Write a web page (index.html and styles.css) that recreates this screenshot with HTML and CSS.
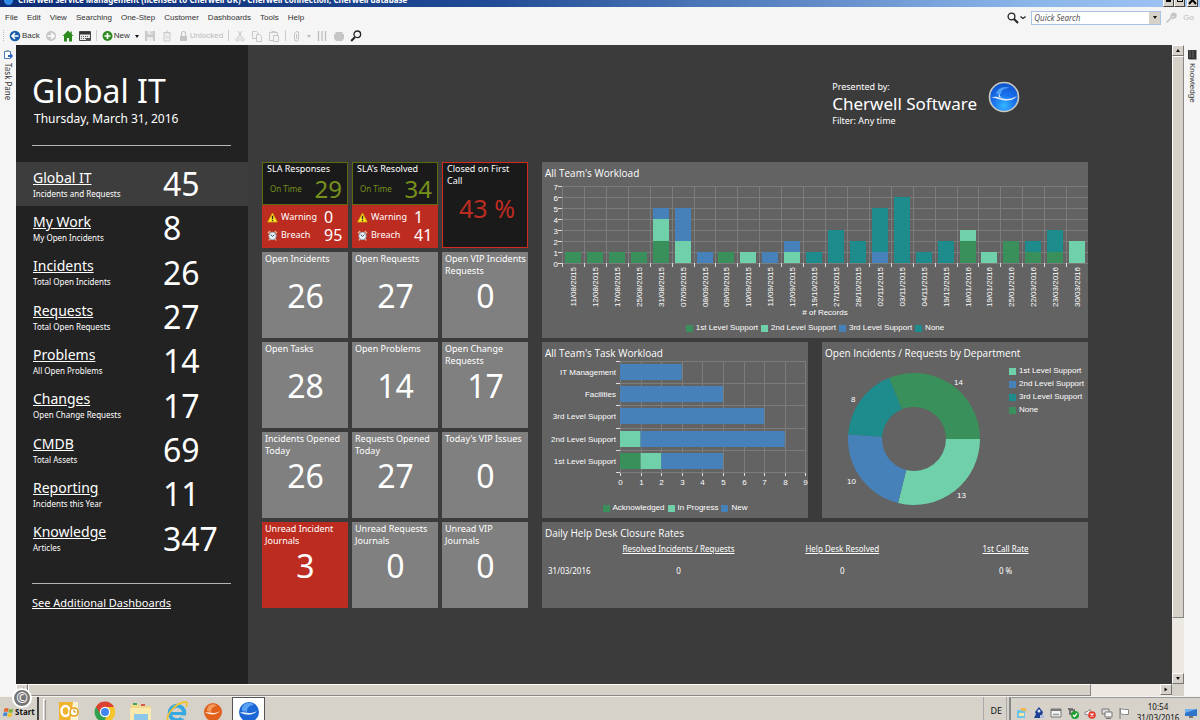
FILE: index.html
```html
<!DOCTYPE html>
<html lang="en">
<head>
<meta charset="utf-8">
<title>Cherwell Service Management</title>
<link rel="stylesheet" href="styles.css">
</head>
<body>
<header class="titlebar">
  <span class="titlebar-logo"></span>
  <span class="titlebar-text">Cherwell Service Management (licensed to Cherwell UK) - Cherwell connection, Cherwell database</span>
  <div class="window-buttons">
    <button aria-label="Minimize"><i class="bar"></i></button><button aria-label="Restore"><i class="box"></i></button><button class="close" aria-label="Close"><svg width="9" height="8" viewBox="0 0 9 8"><path d="M1 -2 8 6M8 -2 1 6" stroke="#000" stroke-width="2"/></svg></button>
  </div>
</header>

<div class="menubar">
  <nav class="menus">
    <button>File</button><button>Edit</button><button>View</button><button>Searching</button><button>One-Step</button><button>Customer</button><button>Dashboards</button><button>Tools</button><button>Help</button>
  </nav>
  <div class="search">
    <button class="search-mode" aria-label="Search type"><svg width="20" height="12" viewBox="0 0 20 12" fill="none" stroke="#222"><circle cx="4.5" cy="4.5" r="3.4" stroke-width="1.3"/><path d="m7 7 4 4" stroke-width="2"/><path d="m13.500 4.500 2.500 2 2.500-2" stroke-width="1.300"/></svg></button>
    <div class="search-box"><input type="text" placeholder="Quick Search" aria-label="Quick Search"><button aria-label="Recent searches"><i class="caret"></i></button></div>
    <button class="search-tool" aria-label="Search options"><svg width="12" height="12" viewBox="0 0 12 12"><path d="M1.500 10.500 7 5M6.500 5.500C5.600 3 7.500 1 9.500 1.500L8 3l1 1 1.800-1.300C11.500 5 9.300 6.600 7 6" fill="none" stroke="#c4c4c4" stroke-width="1.600"/></svg></button>
    <button class="go" disabled>Go</button>
  </div>
</div>

<div class="toolbar">
  <i class="grip"></i>
  <button><svg width="12" height="12" viewBox="0 0 12 12"><circle cx="6" cy="6" r="5.300" fill="#1a5da8"/><path d="M9.500 6H3M6 3 3 6l3 3" stroke="#fff" stroke-width="1.600" fill="none"/></svg>Back</button>
  <button aria-label="Forward"><svg width="12" height="12" viewBox="0 0 12 12"><circle cx="6" cy="6" r="5" fill="#c6c6c6"/><path d="M2.500 6H9M6 3l3 3-3 3" stroke="#fff" stroke-width="1.600" fill="none"/></svg></button>
  <button aria-label="Home"><svg width="12" height="12" viewBox="0 0 12 12"><path d="M6 .5.500 6H2v5.500h3V8h2v3.500h3V6h1.500L9.800 4.200V1.500H8.500V3z" fill="#2c8a1e"/></svg></button>
  <button aria-label="Calendar"><svg width="12" height="12" viewBox="0 0 12 12"><path d="M.5 1.500h11v9H.5z" fill="#e8e8e8" stroke="#444"/><path d="M1 2h10v2.500H1z" fill="#333"/><path d="M2 6.500h8M2 8.500h5" stroke="#666" stroke-dasharray="1 1"/><path d="M7 8h4v3H7z" fill="#555"/></svg></button>
  <i class="sep"></i>
  <button><svg width="11" height="12" viewBox="0 0 11 12"><circle cx="5.500" cy="6" r="5" fill="#2c8a1e"/><path d="M5.500 3v6M2.500 6h6" stroke="#fff" stroke-width="1.700"/></svg>New</button>
  <button aria-label="New options"><i class="caret"></i></button>
  <button aria-label="Save"><svg width="12" height="12" viewBox="0 0 12 12"><path d="M1 1h10v10H1z" fill="#c9c9c9"/><path d="M3.500 1h5v3.500h-5zM3 7h6v4H3z" fill="#ececec"/><path d="M7 1.500v2" stroke="#bbb"/></svg></button>
  <button aria-label="Delete"><svg width="12" height="12" viewBox="0 0 12 12"><path d="M3 3h6v8H3zM2.500 2.500h7M5 1h2" fill="none" stroke="#cbcbcb"/><path d="M5 5v4M7 5v4" stroke="#d4d4d4"/></svg></button>
  <button class="muted" disabled><svg width="11" height="12" viewBox="0 0 11 12"><path d="M2 6h7v5H2z" fill="#c4c4c4"/><path d="M3.500 6V3.500a2 2 0 0 1 4 0V6" fill="none" stroke="#c4c4c4" stroke-width="1.200"/></svg>Unlocked</button>
  <i class="sep"></i>
  <button aria-label="Cut"><svg width="12" height="12" viewBox="0 0 12 12" fill="none" stroke="#c8c8c8"><path d="m4 1 4 7M8 1 4 8"/><circle cx="3.500" cy="9.500" r="1.500"/><circle cx="8.500" cy="9.500" r="1.500"/></svg></button>
  <button aria-label="Copy"><svg width="12" height="12" viewBox="0 0 12 12" fill="#f4f4f4" stroke="#c8c8c8"><path d="M1.500 1.500h4l2 2v5h-6z"/><path d="M5.500 4.500h3l2 2v5h-5z"/></svg></button>
  <button aria-label="Paste"><svg width="12" height="12" viewBox="0 0 12 12" fill="#f4f4f4" stroke="#c8c8c8"><path d="M1.500 2.500h8v8h-8zM3.500 1.500h4"/><path d="M5.500 5.500h5v6h-5z"/></svg></button>
  <i class="sep"></i>
  <button aria-label="Attach"><svg width="11" height="12" viewBox="0 0 11 12" fill="none" stroke="#c4c4c4"><path d="M3.500 3v6a2 2 0 0 0 4 0V3a1.500 1.500 0 0 0-3 0"/><path d="M5.500 4v5"/></svg></button>
  <button class="muted" aria-label="Attach options"><i class="caret pale"></i></button>
  <button aria-label="Columns"><svg width="12" height="12" viewBox="0 0 12 12"><path d="M2.500 1v10M6 1v10M9.500 1v10" stroke="#bdbdbd" stroke-width="1.300"/></svg></button>
  <button aria-label="Print"><svg width="12" height="12" viewBox="0 0 12 12"><path d="M2.500 2h7v3h-7zM1 4h10v4.500L9 11H3L1 8.500z" fill="#c6c6c6"/></svg></button>
  <button aria-label="Find"><svg width="12" height="12" viewBox="0 0 12 12" fill="none" stroke="#222"><circle cx="7.300" cy="4.300" r="3.300" stroke-width="1.300"/><path d="M5 7 1.200 11" stroke-width="2"/></svg></button>
</div>

<div class="workspace">
  <aside class="dock dock-left">
    <svg width="9" height="11" viewBox="0 0 9 11"><path d="M.5 2.500h6v7h-6z" fill="#fff" stroke="#4b78c0"/><path d="M2 1h3v2H2z" fill="#8aa"/><path d="M4 6h3V4.500L9 7 7 9.500V8H4z" fill="#2f63c4"/></svg>
    <button>Task Pane</button>
  </aside>

  <div class="client">
    <div class="client-row">
      <aside class="sidebar">
        <div class="sidebar-head">
          <h1>Global IT</h1>
          <p>Thursday, March 31, 2016</p>
        </div>
        <nav class="metrics">
          <div class="metric current"><div><a href="#">Global IT</a><small>Incidents and Requests</small></div><strong>45</strong></div>
          <div class="metric"><div><a href="#">My Work</a><small>My Open Incidents</small></div><strong>8</strong></div>
          <div class="metric"><div><a href="#">Incidents</a><small>Total Open Incidents</small></div><strong>26</strong></div>
          <div class="metric"><div><a href="#">Requests</a><small>Total Open Requests</small></div><strong>27</strong></div>
          <div class="metric"><div><a href="#">Problems</a><small>All Open Problems</small></div><strong>14</strong></div>
          <div class="metric"><div><a href="#">Changes</a><small>Open Change Requests</small></div><strong>17</strong></div>
          <div class="metric"><div><a href="#">CMDB</a><small>Total Assets</small></div><strong>69</strong></div>
          <div class="metric"><div><a href="#">Reporting</a><small>Incidents this Year</small></div><strong>11</strong></div>
          <div class="metric"><div><a href="#">Knowledge</a><small>Articles</small></div><strong>347</strong></div>
        </nav>
        <div class="sidebar-foot"><a href="#">See Additional Dashboards</a></div>
      </aside>

      <main class="board">
        <div class="presenter">
          <div>
            <p>Presented by:</p>
            <h2>Cherwell Software</h2>
            <p>Filter: Any time</p>
          </div>
          <svg width="32" height="32" viewBox="0 0 32 32"><defs><radialGradient id="orb" cx=".5" cy=".8" r=".75"><stop offset="0" stop-color="#35b8ff"/><stop offset=".5" stop-color="#1a72ee"/><stop offset="1" stop-color="#0f55cc"/></radialGradient></defs><circle cx="16" cy="16" r="14.500" fill="url(#orb)" stroke="#c9c9c4" stroke-width="1.600"/><path d="M8 13C9 8 15 4 22 7c-5 0-9 2-9 6z" fill="#4d9df5"/><path d="M3 16.500c4-1.500 7-.5 10 .5 5 1.500 10 1.500 16-2-3 4-9 5.500-15 4-4-1-7-2.500-11-2.500z" fill="#dfeaf2"/><path d="M11 16c-1-2 0-3 1-3.500-1 2 0 3 2 4z" fill="#dfeaf2"/></svg>
        </div>

        <div class="board-body">
          <section class="tiles">
            <div class="tile sla">
              <div class="sla-top"><h3>SLA Responses</h3><p><span>On Time</span><b>29</b></p></div>
              <div class="sla-bottom">
                <p><svg class="ico" viewBox="0 0 12 12"><path d="M6 1 11.300 11H.7z" fill="#ffe12a" stroke="#c9a400" stroke-width=".8"/><path d="M6 4v3.600M6 8.500V10" stroke="#222" stroke-width="1.400"/></svg><span>Warning</span><b>0</b></p>
                <p><svg class="ico" viewBox="0 0 12 12"><path d="M1 3.500 3.500 1M11 3.500 8.500 1M3 9.500l-1 2M9 9.500l1 2" stroke="#d8b48a" stroke-width="1.500"/><circle cx="6" cy="6.500" r="4" fill="#eaf6fa" stroke="#9ab"/><path d="M4 5l2 2 2-2" stroke="#234" fill="none"/></svg><span>Breach</span><b>95</b></p>
              </div>
            </div>
            <div class="tile sla">
              <div class="sla-top"><h3>SLA's Resolved</h3><p><span>On Time</span><b>34</b></p></div>
              <div class="sla-bottom">
                <p><svg class="ico" viewBox="0 0 12 12"><path d="M6 1 11.300 11H.7z" fill="#ffe12a" stroke="#c9a400" stroke-width=".8"/><path d="M6 4v3.600M6 8.500V10" stroke="#222" stroke-width="1.400"/></svg><span>Warning</span><b>1</b></p>
                <p><svg class="ico" viewBox="0 0 12 12"><path d="M1 3.500 3.500 1M11 3.500 8.500 1M3 9.500l-1 2M9 9.500l1 2" stroke="#d8b48a" stroke-width="1.500"/><circle cx="6" cy="6.500" r="4" fill="#eaf6fa" stroke="#9ab"/><path d="M4 5l2 2 2-2" stroke="#234" fill="none"/></svg><span>Breach</span><b>41</b></p>
              </div>
            </div>
            <div class="tile first-call"><h3>Closed on First Call</h3><b>43 %</b></div>
            <div class="tile"><h3>Open Incidents</h3><b>26</b></div>
            <div class="tile"><h3>Open Requests</h3><b>27</b></div>
            <div class="tile"><h3>Open VIP Incidents Requests</h3><b>0</b></div>
            <div class="tile"><h3>Open Tasks</h3><b>28</b></div>
            <div class="tile"><h3>Open Problems</h3><b>14</b></div>
            <div class="tile"><h3>Open Change Requests</h3><b>17</b></div>
            <div class="tile"><h3>Incidents Opened Today</h3><b>26</b></div>
            <div class="tile"><h3>Requests Opened Today</h3><b>27</b></div>
            <div class="tile"><h3>Today's VIP Issues</h3><b>0</b></div>
            <div class="tile alert"><h3>Unread Incident Journals</h3><b>3</b></div>
            <div class="tile"><h3>Unread Requests Journals</h3><b>0</b></div>
            <div class="tile"><h3>Unread VIP Journals</h3><b>0</b></div>
          </section>

          <section class="panels">
            <article class="panel wide">
              <h3>All Team's Workload</h3>
              <svg class="chart" id="workload" viewBox="0 0 546 141"></svg>
              <ul class="legend">
                <li class="green">1st Level Support</li><li class="mint">2nd Level Support</li><li class="blue">3rd Level Support</li><li class="teal">None</li>
              </ul>
            </article>
            <article class="panel">
              <h3>All Team's Task Workload</h3>
              <svg class="chart tasks" id="tasks" viewBox="0 0 266 128"></svg>
              <ul class="legend"><li class="green">Acknowledged</li><li class="mint">In Progress</li><li class="blue">New</li></ul>
            </article>
            <article class="panel">
              <h3>Open Incidents / Requests by Department</h3>
              <div class="donut-row">
                <svg class="chart" id="departments" viewBox="0 0 184 154"></svg>
                <ul class="legend stacked"><li class="mint">1st Level Support</li><li class="blue">2nd Level Support</li><li class="teal">3rd Level Support</li><li class="green">None</li></ul>
              </div>
            </article>
            <article class="panel wide">
              <h3>Daily Help Desk Closure Rates</h3>
              <table class="rates">
                <colgroup><col class="c-date"><col class="c-a"><col class="c-b"><col></colgroup>
                <thead><tr><td></td><th scope="col">Resolved Incidents / Requests</th><th scope="col">Help Desk Resolved</th><th scope="col">1st Call Rate</th></tr></thead>
                <tbody><tr><th scope="row">31/03/2016</th><td>0</td><td>0</td><td>0 %</td></tr></tbody>
              </table>
            </article>
          </section>
        </div>
      </main>

      <div class="vscroll">
        <button aria-label="Scroll up"><i class="caret up"></i></button>
        <div class="thumb"></div><div class="track"></div>
        <button aria-label="Scroll down"><i class="caret"></i></button>
      </div>
    </div>
    <div class="hscroll">
      <button aria-label="Scroll left"><i class="caret left"></i></button>
      <div class="thumb"></div><div class="track"></div>
      <button aria-label="Scroll right"><i class="caret right"></i></button>
      <i class="corner"></i>
    </div>
  </div>

  <aside class="dock dock-right">
    <svg width="9" height="11" viewBox="0 0 9 11"><path d="M0 1h8v9H0z" fill="#333"/><path d="M2 1v8M5 1v8" stroke="#666"/><path d="M8.500 1v9.500H1" fill="none" stroke="#999"/></svg>
    <button>Knowledge</button>
  </aside>
</div>

<footer class="taskbar">
  <button class="start"><svg width="11" height="11" viewBox="0 0 11 11"><path d="M1.500 1.500q2-1 4 0L4.700 5q-2-1-4 0z" fill="#e8632b"/><path d="M6 1.800q2 1 4.500 0L9.500 5.300q-2 1-4.200 0z" fill="#7ab342"/><path d="M.5 5.700q2-1 4 0L3.700 9.200q-2-1-3.700 0z" fill="#3f87d6"/><path d="M5 6q2 1 4.400 0L8.500 9.600q-2 1-4.300 0z" fill="#f3c52c"/></svg>Start</button>
  <i class="divider"></i>
  <div class="apps">
    <button aria-label="Outlook"><svg width="24" height="24" viewBox="0 0 24 24"><path d="M2 2h19v20H2z" fill="#f2b430"/><path d="M16 2h5v20h-8z" fill="#fff3cf"/><ellipse cx="8.500" cy="11" rx="4" ry="5" fill="none" stroke="#fff" stroke-width="2.500"/><circle cx="17" cy="12" r="4" fill="#fff" stroke="#e5a11c" stroke-width="1.600"/><path d="M17 9.500V12h2" stroke="#c88812" fill="none"/></svg></button>
    <button aria-label="Chrome"><svg width="24" height="24" viewBox="0 0 24 24"><circle cx="12" cy="12" r="10.300" fill="#f5c52a"/><path d="M3 6.800A10.300 10.300 0 0 0 10.500 22.200L14 16z" fill="#30a152"/><path d="M12 7h9a10.300 10.300 0 0 0-18-.2L8 15z" fill="#dc4233"/><circle cx="12" cy="12" r="5.200" fill="#fff"/><circle cx="12" cy="12" r="4" fill="#4286f0"/></svg></button>
    <button aria-label="Explorer"><svg width="24" height="24" viewBox="0 0 24 24"><path d="M2 4h8l1 2h11v16H2z" fill="#f0d98a"/><path d="M4 3h4v2H4z" fill="#46a35e"/><path d="M12 4h4v2h-4z" fill="#d25a4b"/><path d="M1 8h21v14H1z" fill="#f8e9ae"/><path d="M5 14h14v9H5z" fill="#8cc7ea"/></svg></button>
    <button aria-label="Internet Explorer"><svg width="24" height="24" viewBox="0 0 24 24"><circle cx="12" cy="13" r="7.300" fill="none" stroke="#38a8e0" stroke-width="4"/><path d="M6 13.500h14" stroke="#38a8e0" stroke-width="3"/><path d="M16 15.500h6v3h-6z" fill="#d6d2ca"/><path d="M3 21C0 16 10 3 20 2c3 0 2 3 1 5" fill="none" stroke="#f3c430" stroke-width="1.800"/></svg></button>
    <button aria-label="Cherwell Administrator"><svg width="24" height="24" viewBox="0 0 24 24"><circle cx="12" cy="12" r="9" fill="#e0601c"/><path d="M6 11a6 6 0 0 1 10-5c-3 0-6 2-6 6z" fill="#f39a60"/><path d="M4 12.500c5-1 8 2.500 15-1.500-4 4.500-9 4-15 1.500z" fill="#fbe9dd"/></svg></button>
    <button class="active" aria-label="Cherwell Service Management"><svg width="24" height="24" viewBox="0 0 24 24"><circle cx="12" cy="12" r="10" fill="#1c66d6"/><path d="M5 11a7 7 0 0 1 12-6c-4 0-7 2-7 7z" fill="#5ba2f2"/><path d="M3 12.500c5-1 9 2.500 17-1.500-4 5-11 4.500-17 1.500z" fill="#e3effa"/></svg></button>
  </div>
  <button class="lang">DE</button>
  <div class="tray">
    <svg viewBox="0 0 12 12"><path d="M1 3h8v8H1z" fill="#6ec3e6"/><path d="M4 1h5l2 3H6z" fill="#f0b64b"/><path d="M3 6h5v3H3z" fill="#f7e9a5"/></svg>
    <svg viewBox="0 0 12 12"><path d="M6 0 10 5l-1 3 2 3H1l2-4-1-2z" fill="#1c3f94"/><circle cx="6" cy="4" r="1.500" fill="#dde6f5"/><path d="M7 8h4v3H7z" fill="#aebfdf"/></svg>
    <svg viewBox="0 0 12 12"><path d="M1 2h10v8H1z" fill="#f2f2f2" stroke="#777"/><path d="M1 2h10v2H1z" fill="#777"/><path d="M3 7.500h6" stroke="#999" stroke-width="1.500"/></svg>
    <svg viewBox="0 0 12 12"><path d="M1 2h2v5h4V3h1M5 1v3" fill="none" stroke="#555" stroke-width="1.500"/><circle cx="8" cy="8" r="4" fill="#22a032"/><path d="m6 8 1.500 1.500L10 6.500" fill="none" stroke="#fff" stroke-width="1.200"/></svg>
    <svg viewBox="0 0 12 12"><path d="M1 5h2l3-3v8L3 7.500H1z" fill="#fff" stroke="#888"/><circle cx="8" cy="8" r="3.800" fill="#e03a2c"/><path d="m6.500 6.500 3 3m0-3-3 3" stroke="#fff" stroke-width="1.200"/></svg>
    <svg viewBox="0 0 12 12"><path d="M1 2h7v5H1z" fill="#ddd" stroke="#777"/><path d="M4 5h7v5H4z" fill="#f4f4f4" stroke="#777"/><path d="M5 11.500h5" stroke="#777"/></svg>
    <svg viewBox="0 0 12 12"><path d="M2 1v11" stroke="#777"/><path d="M2.500 1.500q2 1 4 1h4v5h-4q-2 0-4-1z" fill="#fff" stroke="#888"/></svg>
    <time>10:54<br>31/03/2016</time>
    <svg class="desk" viewBox="0 0 12 12"><path d="M0 2h12v7H0z" fill="#2f74c9"/><path d="M0 2h12L0 6z" fill="#6fb0ee"/><path d="M4 9h4v2H4z" fill="#777"/></svg>
  </div>
  <span class="copyright">©</span>
</footer>
<script src="charts.js"></script>
</body>
</html>
```
FILE: styles.css
```css
* { box-sizing: border-box; }

:root {
  --chrome: #d6d2ca;
  --green: #39905a;
  --mint: #70d0a9;
  --blue: #4682b9;
  --teal: #1e8c8c;
  --red: #bd2c21;
  --compact: "Liberation Sans", "Noto Sans", sans-serif;
}

body {
  margin: 0;
  height: 100vh;
  overflow: hidden;
  display: flex;
  flex-direction: column;
  background: #f5f5f5;
  color: #fff;
  font-family: "Noto Sans", "Open Sans", sans-serif;
  font-size: 9px;
  line-height: 12px;
}

h1, h2, h3, p, ul { margin: 0; padding: 0; font-weight: 400; }
button { border: 0; padding: 0; margin: 0; background: none; color: inherit; font: inherit; }
svg { display: block; flex: none; }
a { color: inherit; }

/* window frame */
.titlebar {
  flex: none;
  height: 7px;
  overflow: hidden;
  display: flex;
  align-items: flex-end;
  gap: 5px;
  padding: 0 2px 0 4px;
  background: linear-gradient(90deg, #0c2c74, #1f4a94 40%, #8ab4e8 85%, #a0c6f4);
}
.titlebar-logo { width: 9px; height: 9px; margin-bottom: 2px; border-radius: 50%; background: #2f8ae8; flex: none; }
.titlebar-text { flex: 1; white-space: nowrap; font-size: 8px; font-weight: 700; line-height: 14px; }
.window-buttons { display: flex; }
.window-buttons button {
  display: flex; align-items: flex-end; justify-content: center;
  width: 11px; height: 12px; padding-bottom: 4px;
  background: var(--chrome); border: 1px solid #404040; border-left-color: #fff;
}
.window-buttons .close { margin-left: 2px; padding: 0; }
.window-buttons .bar { width: 5px; height: 2px; background: #000; }
.window-buttons .box { width: 6px; height: 6px; border: 1px solid #000; }

.menubar { flex: none; height: 21px; display: flex; align-items: center; justify-content: space-between; padding: 0 5px; color: #333; font-family: var(--compact); font-size: 8px; }
.menus { display: flex; gap: 9px; }
.search { display: flex; align-items: center; gap: 4px; }
.search-box { display: flex; height: 14px; border: 1px solid #a9c4e6; background: #fff; }
.search-box input { width: 117px; border: 0; padding: 0 2px; background: none; font: italic 8px "Noto Sans", sans-serif; color: #333; }
.search-box input::placeholder { color: #555; opacity: 1; }
.search-box button { width: 11px; background: var(--chrome); display: grid; place-items: center; }
.go { color: #bbb; padding: 0 1px 0 2px; }

.caret { display: block; width: 0; height: 0; border: 2px solid transparent; border-top: 3px solid #111; border-bottom: 0; }
.caret.pale { border-top-color: #bbb; }
.caret.up { transform: rotate(180deg); }
.caret.left { transform: rotate(90deg); }
.caret.right { transform: rotate(-90deg); }

.toolbar { flex: none; height: 17px; display: flex; align-items: flex-start; gap: 5px; padding: 2px 3px 0; color: #333; font-family: var(--compact); font-size: 8px; }
.toolbar button { display: flex; align-items: center; gap: 1px; min-height: 12px; }
.toolbar .muted { color: #bbb; }
.toolbar .grip { width: 1px; height: 11px; border-left: 1px dotted #bbb; }
.toolbar .sep { width: 1px; height: 11px; background: #ccc; }

/* docked panes */
.workspace { flex: 1; min-height: 0; display: flex; }
.dock { flex: none; width: 16px; display: flex; flex-direction: column; align-items: center; gap: 3px; padding-top: 4px; color: #333; font-size: 8px; }
.dock button { writing-mode: vertical-rl; }
.dock-right { font-family: var(--compact); }

.client { flex: 1; min-width: 0; display: flex; flex-direction: column; }
.client-row { flex: 1; min-height: 0; display: flex; background: #3b3b3b; }

/* sidebar */
.sidebar { flex: none; width: 232px; background: #222; }
.sidebar-head { height: 101px; margin: 0 17px 16px 16px; padding-top: 26px; border-bottom: 1px solid #b5b5b5; }
.sidebar-head h1 { font-size: 32px; line-height: 40px; }
.sidebar-head p { padding-left: 2px; font-size: 12px; line-height: 16px; }
.metrics { display: grid; grid-template-rows: repeat(9, 1fr); height: 399px; }
.metric { display: grid; grid-template-columns: 130px 1fr; align-items: center; padding-left: 17px; }
.metric a { display: block; font-size: 14px; line-height: 18px; }
.metric small { display: block; margin-top: 1px; font-size: 8px; line-height: 12px; }
.metric strong { font-size: 32px; line-height: 40px; font-weight: 400; }
.current { background: #3d3d3d; }
.sidebar-foot { margin: 22px 17px 0 16px; padding-top: 12px; border-top: 1px solid #b5b5b5; font-size: 11px; line-height: 14px; }

/* dashboard */
.board { flex: 1; min-width: 0; padding: 0 84px 0 14px; }
.presenter { height: 117px; display: flex; align-items: flex-start; justify-content: flex-end; gap: 11px; padding: 36px 68px 0 0; }
.presenter h2 { font-size: 17px; line-height: 22px; }
.presenter p { line-height: 12px; }
.board-body { display: flex; gap: 14px; }

.tiles { flex: none; display: grid; grid-template-columns: repeat(3, 86px); grid-auto-rows: 86px; gap: 4px; }
.tile { display: grid; grid-template-rows: 26px 1fr; background: #808080; padding: 1px 2px 0 3px; }
.tile h3 { font-size: 9px; line-height: 12px; }
.tile > b { font-size: 32px; line-height: 33px; font-weight: 400; text-align: center; }
.tile.alert { background: var(--red); }
.tile.first-call { background: #1a1a1a; border: 1px solid #d42a20; padding: 0 0 0 4px; }
.tile.first-call > b { color: var(--red); font-size: 25px; line-height: 38px; }
.tile.sla { display: block; padding: 0; background: var(--red); }
.sla-top { height: 43px; padding: 0 5px 0 4px; background: #1a1a1a; border: 1px solid #5b6b10; }
.sla-top p { display: flex; align-items: center; justify-content: space-between; padding-left: 3px; color: #76901c; line-height: 28px; font-size: 8px; }
.sla-top b { font-size: 24px; font-weight: 400; }
.sla-bottom { padding: 3px 4px 0 5px; }
.sla-bottom p { display: grid; grid-template-columns: 14px 43px 1fr; align-items: center; line-height: 18px; }
.sla-bottom b { font-size: 16px; font-weight: 400; }
.ico { width: 11px; height: 11px; }

.panels { flex: 1; min-width: 0; display: grid; grid-template-columns: 1fr 1fr; grid-template-rows: 176px 176px 86px; gap: 4px 14px; }
.panel { background: #636363; overflow: hidden; }
.wide { grid-column: span 2; }
.panel h3 { padding: 3px 3px 0; font-family: "Open Sans", sans-serif; font-size: 10px; line-height: 16px; }
.chart { width: 100%; font-family: var(--compact); font-size: 8px; fill: #fff; }
.legend { display: flex; justify-content: center; gap: 3px; list-style: none; font-family: var(--compact); font-size: 8px; line-height: 12px; white-space: nowrap; }
.legend li { display: flex; align-items: center; gap: 3px; }
.legend li::before { content: ""; width: 7px; height: 7px; }
.legend .green::before { background: var(--green); }
.legend .mint::before { background: var(--mint); }
.legend .blue::before { background: var(--blue); }
.legend .teal::before { background: var(--teal); }
.chart .green { fill: var(--green); }
.chart .mint { fill: var(--mint); }
.chart .blue { fill: var(--blue); }
.chart .teal { fill: var(--teal); }
.grid-line { stroke: #7c7c7c; }
.tick { stroke: #ddd; }
.end { text-anchor: end; }
.middle { text-anchor: middle; }
.tasks + .legend { padding-top: 13px; }
.donut-row { display: grid; grid-template-columns: 184fr 82fr; }
.legend.stacked { flex-direction: column; justify-content: flex-start; gap: 1px; padding: 4px 0 0 3px; }

.rates { width: 100%; table-layout: fixed; border-collapse: collapse; font-size: 8px; line-height: 12px; text-align: center; }
.rates th, .rates td { padding: 2px 0; font-weight: 400; }
.rates thead th { text-decoration: underline; }
.rates tbody th { text-align: left; padding-left: 6px; }
.rates tbody td, .rates tbody th { padding-top: 8px; }
.rates tr > :last-child { padding-right: 12px; }
.c-date { width: 12%; }
.c-a { width: 26%; }
.c-b { width: 34%; }

/* scroll bars */
.vscroll, .hscroll { flex: none; display: flex; background: #ece9e2; }
.vscroll { width: 12px; flex-direction: column; }
.hscroll { height: 12px; }
.vscroll button, .hscroll button { flex: none; width: 12px; height: 11px; display: grid; place-items: center; background: var(--chrome); border: 1px solid #777; border-top-color: #fff; border-left-color: #fff; }
.thumb { background: var(--chrome); border: 1px solid #888; border-top-color: #fff; border-left-color: #fff; }
.vscroll .thumb { flex: 562; }
.vscroll .track { flex: 55; }
.hscroll .thumb { flex: 1063; }
.hscroll .track { flex: 69; }
.corner { width: 12px; background: var(--chrome); }

/* taskbar */
.taskbar { position: relative; flex: none; height: 24px; display: flex; align-items: flex-start; background: var(--chrome); color: #111; border-top: 1px solid #f4f2ee; }
.start { display: flex; align-items: center; gap: 1px; width: 39px; height: 28px; padding: 2px 0 0 3px; border-right: 2px solid #444; font-weight: 700; font-size: 8px; }
.divider { width: 3px; height: 24px; margin: 2px 6px 0 4px; border: 1px solid #fff; border-right-color: #999; }
.apps { flex: 1; display: flex; gap: 3px; }
.apps button { width: 33px; height: 30px; display: flex; justify-content: center; padding-top: 3px; }
.apps .active { background: #fff; border: 1px solid #555; padding-top: 2px; }
.lang { height: 24px; padding: 3px 4px 0 6px; border-left: 1px solid #aaa; border-right: 1px solid #aaa; font-size: 9px; }
.tray { display: flex; align-items: flex-start; gap: 5px; margin-left: 2px; padding: 9px 3px 0 5px; height: 24px; border-left: 2px solid #888; border-top: 1px solid #999; }
.tray svg { width: 12px; height: 12px; }
.tray time { margin: -6px 0 0 1px; width: 44px; text-align: center; font-size: 8px; line-height: 11px; }
.copyright { position: absolute; left: 12px; top: -9px; width: 20px; height: 20px; border-radius: 50%; border: 2px solid #fff; background: #777; color: #fff; display: grid; place-items: center; font-size: 14px; line-height: 14px; }
```
FILE: charts.js
```js
const node = (name, attrs, text) => {
  const el = document.createElementNS("http://www.w3.org/2000/svg", name);
  for (const key in attrs) el.setAttribute(key, attrs[key]);
  if (text !== undefined) el.textContent = text;
  return el;
};

// Stacked columns: records per day and team
(() => {
  const svg = document.getElementById("workload");
  const days = [
    ["11/08/2015", { green: 1 }], ["12/08/2015", { green: 1 }], ["17/08/2015", { green: 1 }],
    ["25/08/2015", { green: 1 }], ["31/08/2015", { green: 2, mint: 2, blue: 1 }],
    ["07/09/2015", { mint: 2, blue: 3 }], ["08/09/2015", { blue: 1 }], ["09/09/2015", { green: 1 }],
    ["10/09/2015", { mint: 1 }], ["11/09/2015", { blue: 1 }], ["12/09/2015", { mint: 1, blue: 1 }],
    ["19/10/2015", { teal: 1 }], ["27/10/2015", { teal: 3 }], ["28/10/2015", { teal: 2 }],
    ["02/11/2015", { blue: 1, teal: 4 }], ["03/11/2015", { teal: 6 }], ["04/11/2015", { teal: 1 }],
    ["19/12/2015", { teal: 2 }], ["18/01/2016", { green: 2, mint: 1 }], ["19/01/2016", { mint: 1 }],
    ["25/01/2016", { green: 2 }], ["22/03/2016", { green: 1, teal: 1 }],
    ["23/03/2016", { green: 1, teal: 2 }], ["30/03/2016", { mint: 2 }]
  ];
  const left = 20, right = 546, base = 82, unit = 11, step = (right - left) / days.length;
  for (let v = 0; v <= 7; v++) {
    const y = base - v * unit + 0.5;
    svg.append(node("path", { class: "grid-line", d: `M${left} ${y}H${right}` }));
    svg.append(node("path", { class: "tick", d: `M${left - 4} ${y}H${left}` }));
    svg.append(node("text", { class: "end", x: left - 4, y: y + 3 }, v));
  }
  for (let i = 0; i <= days.length; i++) {
    const x = Math.round(left + i * step) + 0.5;
    svg.append(node("path", { class: "grid-line", d: `M${x} ${base - 7 * unit}V${base}` }));
    svg.append(node("path", { class: "tick", d: `M${x} ${base}v4` }));
  }
  days.forEach(([label, stack], i) => {
    const x = Math.round(left + i * step) + 3;
    let y = base;
    for (const team in stack) {
      y -= stack[team] * unit;
      svg.append(node("rect", { class: team, x, y, width: 16, height: stack[team] * unit }));
    }
    svg.append(node("text", { class: "end", transform: `translate(${x + 11} ${base + 4}) rotate(-90)` }, label));
  });
  svg.append(node("text", { class: "middle", x: 283, y: 134 }, "# of Records"));
})();

// Stacked rows: tasks per team
(() => {
  const svg = document.getElementById("tasks");
  const teams = [
    ["IT Management", { blue: 3 }], ["Facilities", { blue: 5 }], ["3rd Level Support", { blue: 7 }],
    ["2nd Level Support", { mint: 1, blue: 7 }], ["1st Level Support", { green: 1, mint: 1, blue: 3 }]
  ];
  const left = 78, top = 0, row = 22.2, unit = 20.6, bottom = top + row * teams.length;
  for (let v = 0; v <= 9; v++) {
    const x = Math.round(left + v * unit) + 0.5;
    svg.append(node("path", { class: "grid-line", d: `M${x} ${top}V${bottom}` }));
    svg.append(node("path", { class: "tick", d: `M${x} ${bottom}v4` }));
    svg.append(node("text", { class: "middle", x, y: bottom + 13 }, v));
  }
  for (let i = 0; i <= teams.length; i++) {
    const y = Math.round(top + i * row) + 0.5;
    svg.append(node("path", { class: "grid-line", d: `M${left} ${y}H264` }));
    svg.append(node("path", { class: "tick", d: `M${left - 4} ${y}H${left}` }));
  }
  teams.forEach(([label, stack], i) => {
    const y = Math.round(top + i * row) + 3;
    let x = left;
    for (const state in stack) {
      svg.append(node("rect", { class: state, x, y, width: stack[state] * unit, height: 16 }));
      x += stack[state] * unit;
    }
    svg.append(node("text", { class: "end", x: left - 4, y: y + 11 }, label));
  });
})();

// Donut: open work per department
(() => {
  const svg = document.getElementById("departments");
  const parts = [["mint", 13, 135, 137], ["blue", 10, 25, 123], ["teal", 8, 29, 41], ["green", 14, 132, 24]];
  const cx = 92, cy = 78, outer = 66, inner = 32, total = 45;
  const at = (r, a) => `${(cx + r * Math.cos(a)).toFixed(2)} ${(cy + r * Math.sin(a)).toFixed(2)}`;
  let from = 0;
  for (const [team, count, tx, ty] of parts) {
    const to = from + count / total * 2 * Math.PI;
    svg.append(node("path", {
      class: team,
      d: `M${at(outer, from)}A${outer} ${outer} 0 0 1 ${at(outer, to)}L${at(inner, to)}A${inner} ${inner} 0 0 0 ${at(inner, from)}Z`
    }));
    svg.append(node("text", { x: tx, y: ty }, count));
    from = to;
  }
})();
```
